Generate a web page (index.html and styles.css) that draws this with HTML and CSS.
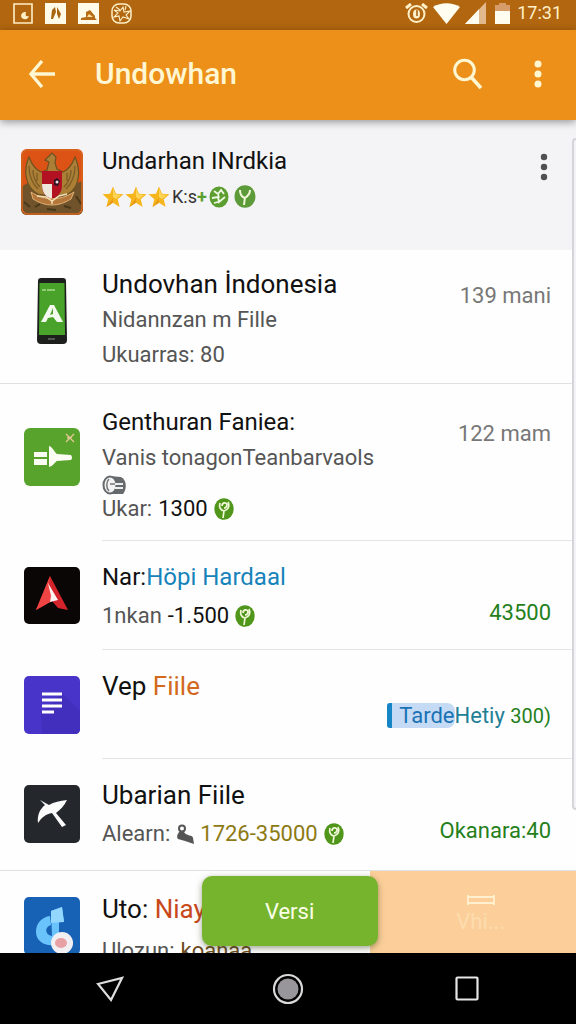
FILE: index.html
```html
<!DOCTYPE html>
<html lang="id">
<head>
    <meta charset="UTF-8">
    <meta name="viewport" content="width=device-width, initial-scale=1">
    <title>Undowhan</title>
    <link rel="stylesheet" href="styles.css">
</head>
<body>

<svg class="defs" width="0" height="0" aria-hidden="true">
    <symbol id="coin" viewBox="0 0 20 22">
        <ellipse cx="10" cy="11" rx="9.7" ry="10.8" fill="#4f961b"/>
        <path d="M6 5c-1 4 0 7 4 8l-1 7M14 4c2 4 0 8-4 9M8 8c0-4 5-4 5-1 0 2-2 3-3 3" fill="none" stroke="#f2f8d8" stroke-width="1.7"/>
    </symbol>
    <symbol id="star" viewBox="0 0 22 22">
        <path d="M11 0.5l3 7.2 7.5.5-5.8 5 1.9 7.8-6.6-4.3L4.4 21l1.9-7.8-5.8-5 7.5-.5z" fill="#f7b51c"/>
        <path d="M11 2l2.4 6.3 5.6.7-5 4L11 11z" fill="#ffd557"/>
        <path d="M4.4 21L11 12v4.7z" fill="#e79a16"/>
    </symbol>
</svg>

<header class="status">
    <svg width="20" height="21" viewBox="0 0 20 21"><path d="M1 1h18v19H1z" fill="none" stroke="#fff0c8" stroke-width="1.6"/><path d="M13 9c-5-1-7 6-2 7 3 1 4-1 5-3-3 1-4 0-3-4z" fill="#fff0c8"/></svg>
    <svg width="21" height="21" viewBox="0 0 21 21"><path d="M0 0h21v21H0z" fill="#fffbe8"/><path d="M6 16l1-9 3-3 1 5-3 7zM12 4l4 7-2 5-2-5z" fill="#a9640f"/></svg>
    <svg width="21" height="21" viewBox="0 0 21 21"><path d="M0 0h21v21H0z" fill="#fffbe8"/><path d="M3 15l5-1V9l4-2 5 6v2l2 2H3z" fill="#b66c16"/><path d="M9 14l2-3 4 3z" fill="#ffe2a0"/></svg>
    <svg width="21" height="21" viewBox="0 0 21 21"><rect x="1" y="1" width="19" height="19" rx="7" fill="none" stroke="#fff0c8" stroke-width="1.5"/><path d="M3 7l6 1 3-4 1 5 6-1-4 4 3 4-6-2-3 4-1-5-5 1 4-4zM5 4l4 3M15 3l-1 4" fill="none" stroke="#fff0c8" stroke-width="1.1"/></svg>
    <div class="status-right">
        <svg width="23" height="21" viewBox="0 0 23 21"><circle cx="11.5" cy="11" r="8" fill="none" stroke="#fff0c8" stroke-width="2"/><path d="M1 5l5-4M22 5l-5-4" stroke="#fff0c8" stroke-width="3"/><ellipse cx="11.5" cy="11" rx="3.5" ry="4.5" fill="#fff0c8"/><path d="M12 7v6" stroke="#a25c0c" stroke-width="1.5"/></svg>
        <svg width="27" height="21" viewBox="0 0 27 21"><path d="M0 4C8-1 19-1 27 4L13.500 21z" fill="#fffdf0"/></svg>
        <svg width="21" height="22" viewBox="0 0 21 22"><path d="M21 0v22H0z" fill="#e2b98c"/><path d="M14 7.3V22H0z" fill="#fffdf0"/></svg>
        <svg class="battery" width="15" height="21" viewBox="0 0 15 21"><path d="M0 2h4V0h7v2h4v7H0z" fill="#d69c6a"/><path d="M0 8h15v13H0z" fill="#fffdf0"/></svg>
        <span class="clock">17:31</span>
    </div>
</header>

<div class="appbar">
    <button class="icon-btn" aria-label="Kembali">
        <svg width="28" height="30" viewBox="0 0 28 30"><path d="M14 2L3 15l11 13M3 15h24" fill="none" stroke="#fff6d2" stroke-width="3.4"/></svg>
    </button>
    <h1>Undowhan</h1>
    <button class="icon-btn" aria-label="Cari">
        <svg width="30" height="32" viewBox="0 0 30 32"><circle cx="11.5" cy="12" r="9.8" fill="none" stroke="#fff6d2" stroke-width="3"/><path d="M18 19l10 11" stroke="#fff6d2" stroke-width="3.6"/></svg>
    </button>
    <button class="icon-btn" aria-label="Menu">
        <svg width="8" height="28" viewBox="0 0 8 28"><g fill="#fff6d2"><circle cx="4" cy="4" r="3.5"/><circle cx="4" cy="14" r="3.5"/><circle cx="4" cy="24" r="3.5"/></g></svg>
    </button>
</div>

<main>
    <ul class="list">
        <li class="row featured">
            <div class="thumb">
                <svg width="62" height="66" viewBox="0 0 62 66">
                    <defs><clipPath id="r1"><rect width="62" height="66" rx="6"/></clipPath></defs>
                    <g clip-path="url(#r1)">
                        <path d="M0 0h62v66H0z" fill="#dc5315"/>
                        <path d="M0 38l10-6 40 4 12-4v34H0z" fill="#70532a"/>
                        <path d="M8 8C2 21 4 38 17 45l12 2h6l12-2C59 38 60 21 54 8c-3 8-7 13-12 15l-6-3-2-6 1-6-4-4-4 4-3 3 4 2-2 8-6 2C15 21 11 16 8 8z" fill="#ab8036" stroke="#6f5020" stroke-width="1.200"/>
                        <path d="M8 17c0 10 3 17 9 23M12 21c0 8 3 13 7 17M54 17c0 10-3 17-9 23M50 21c0 8-3 13-7 17M16 24v8M46 24v8" fill="none" stroke="#7c5a25" stroke-width="1.300"/>
                        <path d="M21 22h20v15c0 7-5 11-10 13-6-2-10-6-10-13z" fill="#b21221"/>
                        <path d="M21 35h10v15c-7-2-10-7-10-15z" fill="#eee7dc"/>
                        <path d="M33 31l3-2 3 3-2 5-4-1z" fill="#2b1326"/><circle cx="36" cy="33" r="1.5" fill="#f4dbe0"/>
                        <path d="M10 43c14 9 29 9 43 0l-3 7c-13 8-25 8-38 0z" fill="#b5763b" stroke="#ddb274"/>
                        <path d="M16 47l9 1 6 4 7-5 8-2M31 51v4" fill="none" stroke="#f4dfb5" stroke-width="1.5"/>
                        <path d="M3 53l6 5M55 47l5 8M14 58l5-3M43 57l7 2M26 60l9 1" stroke="#49371a" stroke-width="2"/>
                    </g>
                    <rect x="1" y="1" width="60" height="64" rx="6" fill="none" stroke="#d7651e" stroke-width="1.5"/>
                </svg>
            </div>
            <div class="body">
                <div class="info">
                    <h2 class="narrow">Undarhan INrdkia</h2>
                    <p class="rating">
                        <svg width="22" height="22"><use href="#star"/></svg>
                        <svg width="22" height="22"><use href="#star"/></svg>
                        <svg width="22" height="22"><use href="#star"/></svg>
                        <span class="score">K:s<b>+</b></span>
                        <svg width="20" height="22" viewBox="0 0 20 22"><ellipse cx="10" cy="11" rx="9.5" ry="10.5" fill="#5c9f30"/><path d="M5 5l4 3 3-4 3 4M3 12l6-1 1 5 6-5M5 17l4-1M9 8l1 4" fill="none" stroke="#eff8e4" stroke-width="1.8"/></svg>
                        <svg width="22" height="23" viewBox="0 0 22 23"><ellipse cx="11" cy="11.5" rx="10.5" ry="11.2" fill="#5c9a3a"/><path d="M6 5c0 5 2 7 5 8 3-2 5-4 5-8M11 12l-1 8" fill="none" stroke="#f2f8d8" stroke-width="2"/></svg>
                    </p>
                </div>
                <button class="icon-btn more" aria-label="Opsi">
                    <svg width="8" height="28" viewBox="0 0 8 28"><g fill="#505050"><circle cx="4" cy="4" r="3.2"/><circle cx="4" cy="14" r="3.2"/><circle cx="4" cy="24" r="3.2"/></g></svg>
                </button>
            </div>
        </li>

        <li class="row full">
            <div class="thumb">
                <svg width="30" height="66" viewBox="0 0 30 66">
                    <path d="M4 0h22q3 0 3 3l1 59q0 4-4 4H4q-4 0-4-4L1 3q0-3 3-3z" fill="#1c1f1c"/>
                    <path d="M2.500 5h25l.5 52H2z" fill="#49a32a"/>
                    <path d="M5 12h4M10 12h8" stroke="#a9dc8e" stroke-width="1.5"/>
                    <path d="M4 44l9-17h4l9 17h-6l-4-5-5 1-2 4z" fill="#f4faf0"/><path d="M13 37l3-7v6z" fill="#49a32a"/>
                    <path d="M11 61h7" stroke="#555" stroke-width="2"/>
                </svg>
            </div>
            <div class="body">
                <div class="info">
                    <h2>Undovhan İndonesia</h2>
                    <p>Nidannzan m Fille</p>
                    <p>Ukuarras: 80</p>
                </div>
                <span class="value">139 mani</span>
            </div>
        </li>

        <li class="row tall">
            <div class="thumb">
                <svg width="56" height="58" viewBox="0 0 56 58">
                    <rect width="56" height="58" rx="6" fill="#57a32b"/>
                    <path d="M10 24h13v5H10zM10 31h13v6H10zM25 18c4 1 5 6 8 8l14 1q2 3 0 5l-14 1c-3 2-4 5-8 6z" fill="#fbfdf5"/>
                    <path d="M42 6l8 8M50 6l-8 8M43 10l5-1" stroke="#e4c795" stroke-width="1.3"/>
                </svg>
            </div>
            <div class="body">
                <div class="info">
                    <h2 class="narrow">Genthuran Faniea:</h2>
                    <p>Vanis tonagonTeanbarvaols</p>
                    <svg width="24" height="20" viewBox="0 0 24 20"><path d="M7 1l12 1c6 3 6 12 2 17H8z" fill="#666a6c"/><ellipse cx="8" cy="10" rx="6.5" ry="8.5" fill="#f3f3f3" stroke="#666a6c" stroke-width="2"/><path d="M7 4c-3 3-3 9 0 12M8 9h5" fill="none" stroke="#777" stroke-width="1.5"/><path d="M13 8h8v2h-8zM13 12h8v2h-8z" fill="#eee"/></svg>
                    <p class="line short">Ukar: <span class="dark">1300</span><svg width="20" height="22"><use href="#coin"/></svg></p>
                </div>
                <span class="value">122 mam</span>
            </div>
        </li>

        <li class="row">
            <div class="thumb">
                <svg width="56" height="58" viewBox="0 0 56 58">
                    <rect width="56" height="57" rx="5" fill="#0b0606"/>
                    <path d="M26 9l18 34-10-2-6-7-16 9z" fill="#d3242b"/>
                    <path d="M26 9l-14 34 16-9-3-16z" fill="#ee4544"/>
                    <path d="M24 16l10 17-8 2 1-6z" fill="#fff4f2"/>
                </svg>
            </div>
            <div class="body">
                <div class="info">
                    <h2 class="narrow">Nar:<span class="blue">Höpi Hardaal</span></h2>
                    <p class="line">1nkan <span class="dark">-1.500</span><svg width="20" height="22"><use href="#coin"/></svg></p>
                </div>
                <span class="value low green">43500</span>
            </div>
        </li>

        <li class="row">
            <div class="thumb">
                <svg width="56" height="58" viewBox="0 0 56 58">
                    <rect width="56" height="58" rx="5" fill="#4834c8"/>
                    <path d="M38 17l18 18v18q0 5-5 5H18L17 38z" fill="#422fbe"/>
                    <path d="M18 18h20M18 24h20M18 30h20M18 36h12" stroke="#fff" stroke-width="3"/>
                </svg>
            </div>
            <div class="body">
                <div class="info">
                    <h2>Vep <span class="orange">Fiile</span></h2>
                </div>
                <span class="value tagged"><mark>Tarde</mark><span class="teal">Hetiy</span> <small>300)</small></span>
            </div>
        </li>

        <li class="row full">
            <div class="thumb">
                <svg width="56" height="58" viewBox="0 0 56 58">
                    <rect width="56" height="58" rx="5" fill="#24272c"/>
                    <path d="M16 15l9 5c5-3 11-4 18-5-3 6-7 10-11 13l10 12-4 2-10-14c-6 1-10 4-14 10-1-8 2-14 7-18z" fill="#fbfbfb"/>
                </svg>
            </div>
            <div class="body">
                <div class="info">
                    <h2>Ubarian Fiile</h2>
                    <p class="line">Alearn: <svg width="18" height="20" viewBox="0 0 18 20"><circle cx="6" cy="4.5" r="3" fill="none" stroke="#555" stroke-width="2"/><path d="M3 8l5 0c2 4 9 3 9 6l1 6-9-3-7-2c-2-3 0-5 1-7z" fill="#555"/></svg><span class="olive">1726-35000</span><svg width="20" height="22"><use href="#coin"/></svg></p>
                </div>
                <span class="value low green">Okanara:40</span>
            </div>
        </li>

        <li class="row">
            <div class="thumb">
                <svg width="56" height="58" viewBox="0 0 56 58">
                    <rect width="56" height="58" rx="5" fill="#1762b5"/>
                    <path d="M27 14l11-4 2 15h-5v22c-12 4-23-2-23-12 0-9 6-15 14-16l1 9c-7 2-6 10 1 11z" fill="#6bc3fb"/>
                    <path d="M27 14l11-4 2 15-13 1z" fill="#93d7ff"/>
                    <circle cx="38" cy="46" r="11" fill="#f2eff2"/><ellipse cx="37" cy="46" rx="6" ry="5" fill="#e7a1a4"/>
                </svg>
            </div>
            <div class="body">
                <div class="info">
                    <h2>Uto: <span class="red">Niayu</span></h2>
                    <p class="line">Ulozun: <span class="brown">koanaa</span></p>
                </div>
            </div>
        </li>
    </ul>

    <div class="scroll-edge"></div>

    <div class="actions">
        <button class="version">Versi</button>
        <button class="ghost">
            <svg width="28" height="10" viewBox="0 0 28 10"><path d="M1 0v10M27 0v10M1 2h26M1 8h26" fill="none" stroke="#fff0cf" stroke-width="1.8"/></svg>
            <span>Vhi...</span>
        </button>
    </div>
</main>

<nav class="navbar">
    <button aria-label="Kembali"><svg width="30" height="26" viewBox="0 0 30 26"><path d="M4 8l24-6-11 22z" fill="none" stroke="#ddd" stroke-width="2.2"/></svg></button>
    <button aria-label="Beranda"><svg width="32" height="32" viewBox="0 0 32 32"><circle cx="16" cy="16" r="14" fill="none" stroke="#d8d8d8" stroke-width="2.2"/><circle cx="16" cy="16" r="10.5" fill="#98969a"/></svg></button>
    <button aria-label="Terbaru"><svg width="24" height="25" viewBox="0 0 24 25"><rect x="1.5" y="1.5" width="21" height="22" rx="1" fill="none" stroke="#e6e6e6" stroke-width="2.2"/></svg></button>
</nav>

</body>
</html>
```
FILE: styles.css
```css
* {
    box-sizing: border-box;
}
html, body {
    height: 100%;
    margin: 0;
}
body {
    display: flex;
    flex-direction: column;
    background-color: #fefefe;
    color: #555;
    font-family: Roboto, "Noto Sans", sans-serif;
    font-size: 22px;
    overflow: hidden;
}
h1, h2, p, ul {
    margin: 0;
    padding: 0;
}
svg {
    display: block;
    flex: none;
}
button {
    padding: 0;
    border: 0;
    background: none;
    font-family: inherit;
    cursor: pointer;
}
.defs {
    position: absolute;
}

/* top bars */
.status {
    display: flex;
    flex: none;
    align-items: center;
    gap: 12px;
    height: 30px;
    padding: 0 14px 4px 13px;
    background-color: #b1660f;
}
.status-right {
    display: flex;
    align-items: center;
    gap: 5px;
    margin-left: auto;
}
.battery {
    margin-left: 4px;
}
.clock {
    margin-left: 2px;
    color: #fff0c8;
    font-size: 18px;
    line-height: 24px;
}
.appbar {
    display: flex;
    flex: none;
    align-items: center;
    position: relative;
    z-index: 1;
    height: 90px;
    padding: 0 18px 2px;
    background-color: #ec9019;
    box-shadow: 0 2px 8px rgba(0, 0, 0, 0.4);
}
.icon-btn {
    display: flex;
    align-items: center;
    justify-content: center;
    width: 40px;
    height: 48px;
}
.appbar .icon-btn {
    width: 48px;
}
.appbar h1 {
    flex: 1;
    margin-left: 29px;
    color: #fff6d2;
    font-size: 30px;
    font-weight: 500;
    line-height: 40px;
}
.appbar .icon-btn + .icon-btn {
    margin: 0 -4px 0 22px;
}

/* list */
main {
    position: relative;
    flex: 1;
    min-height: 0;
    overflow: hidden;
}
.list {
    list-style: none;
}
.row {
    display: flex;
    gap: 18px;
    padding-left: 20px;
}
.thumb {
    display: flex;
    flex: none;
    align-items: flex-start;
    justify-content: center;
    width: 64px;
    padding-top: 26px;
}
.body {
    display: flex;
    flex: 1;
    justify-content: space-between;
    min-height: 109px;
    margin-right: 3px;
    padding: 18px 22px 0 0;
    border-bottom: 1px solid #e2e4e8;
}
.full {
    border-bottom: 1px solid #dfe1e4;
}
.full .body {
    min-height: 111px;
    padding-bottom: 11px;
    border-bottom: 0;
}
.featured {
    background-color: #f4f4f6;
}
.featured .thumb {
    padding-top: 29px;
}
.featured .body {
    min-height: 130px;
    padding: 23px 12px 0 0;
    border-bottom: 0;
}
.featured + .row .thumb {
    padding-top: 28px;
}
.featured + .row .body {
    padding-top: 16px;
}
.tall .thumb {
    padding-top: 44px;
}
.tall .body {
    padding: 20px 22px 17px 0;
}
.row:last-child .body {
    padding-top: 20px;
}
.row:last-child p {
    line-height: 48px;
}
h2 {
    color: #111;
    font-size: 26px;
    font-weight: 400;
    line-height: 36px;
    white-space: nowrap;
}
.narrow {
    font-size: 24px;
}
p {
    line-height: 35px;
    white-space: nowrap;
}
.line {
    display: flex;
    align-items: center;
    gap: 6px;
    line-height: 42px;
}
.short {
    line-height: 28px;
}
.rating {
    display: flex;
    align-items: center;
    gap: 1px;
}
.score {
    margin: 0 1px;
    color: #333;
    font-size: 18px;
}
.score b {
    color: #5c9f30;
}
.score + svg {
    margin-right: 4px;
}
.more {
    margin-right: -3px;
}
.value {
    margin-top: 16px;
    color: #777;
    line-height: 28px;
    white-space: nowrap;
}
.low {
    margin-top: 40px;
}
.tagged {
    margin-top: 34px;
}
mark {
    padding: 0 0 0 7px;
    border-left: 5px solid #1685c5;
    border-radius: 3px 8px 8px 3px;
    background-color: #c5dbf5;
    color: #1a72b4;
}
small {
    font-size: 20px;
}
.tagged, .green {
    color: #25801b;
}
.teal {
    color: #227f96;
}
.dark {
    color: #111;
}
.blue {
    color: #1683ba;
}
.orange {
    color: #d2691c;
}
.red {
    color: #c8481a;
}
.olive {
    color: #8c7a14;
}
.brown {
    color: #6b4a1c;
}

.scroll-edge {
    position: absolute;
    top: 18px;
    right: -4px;
    bottom: 143px;
    width: 8px;
    border: 2px solid #d3d5da;
    border-radius: 4px;
    background-color: #f4f4f6;
}

/* bottom actions */
.actions {
    display: flex;
    position: absolute;
    right: 0;
    bottom: 0;
    width: 65%;
    height: 82px;
}
.version {
    flex: 0 0 47%;
    position: relative;
    z-index: 1;
    height: 70px;
    margin-top: 5px;
    border-radius: 10px;
    background-color: #76b42e;
    box-shadow: 0 2px 6px rgba(60, 70, 30, 0.5);
    color: #fbffe8;
    font-size: 22px;
}
.ghost {
    display: flex;
    flex: 1;
    flex-direction: column;
    align-items: center;
    gap: 4px;
    margin-left: -8px;
    padding: 24px 0 0 16px;
    background-color: #fccf9a;
    color: #fddcae;
    font-size: 22px;
    line-height: 26px;
}

/* system navigation */
.navbar {
    display: flex;
    flex: none;
    align-items: center;
    justify-content: center;
    height: 71px;
    background-color: #000;
}
.navbar button {
    display: flex;
    justify-content: center;
    width: 31%;
}
```
